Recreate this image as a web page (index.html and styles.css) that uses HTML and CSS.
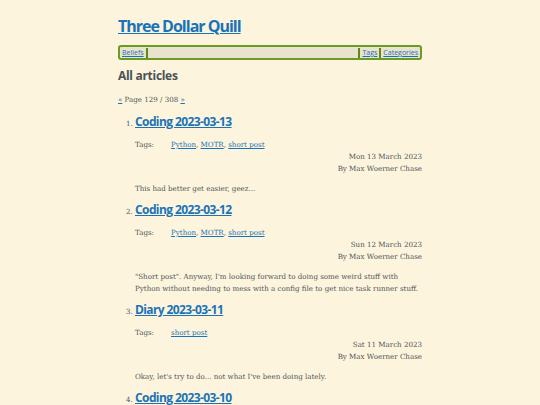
FILE: index.html
```html
<!DOCTYPE html>
<html>
<head>
<meta charset="utf-8">
<link rel="stylesheet" href="styles.css">
<title>All articles</title>
</head>
<body>
<div class="page">
  <header class="site-header">
    <h1 class="site-title"><a href="#">Three Dollar Quill</a></h1>
    <nav class="nav">
      <a href="#">Beliefs</a>
      <span class="sep"></span>
      <span class="spacer"></span>
      <span class="sep"></span>
      <a href="#">Tags</a>
      <span class="sep"></span>
      <a href="#">Categories</a>
    </nav>
  </header>
  <main>
    <h2 class="section-title">All articles</h2>
    <p class="pager"><a href="#">«</a> Page 129 / 308 <a href="#">»</a></p>
    <ol class="articles" start="1">
      <li>
        <h3 class="entry-title"><a href="#">Coding 2023-03-13</a></h3>
        <div class="tags"><span class="tags-label">Tags:</span><span><a href="#">Python</a>, <a href="#">MOTR</a>, <a href="#">short post</a></span></div>
        <div class="meta">Mon 13 March 2023<br>By Max Woerner Chase</div>
        <p class="summary">This had better get easier, geez...</p>
      </li>
      <li>
        <h3 class="entry-title"><a href="#">Coding 2023-03-12</a></h3>
        <div class="tags"><span class="tags-label">Tags:</span><span><a href="#">Python</a>, <a href="#">MOTR</a>, <a href="#">short post</a></span></div>
        <div class="meta">Sun 12 March 2023<br>By Max Woerner Chase</div>
        <p class="summary">"Short post". Anyway, I'm looking forward to doing some weird stuff with Python without needing to mess with a config file to get nice task runner stuff.</p>
      </li>
      <li>
        <h3 class="entry-title"><a href="#">Diary 2023-03-11</a></h3>
        <div class="tags"><span class="tags-label">Tags:</span><span><a href="#">short post</a></span></div>
        <div class="meta">Sat 11 March 2023<br>By Max Woerner Chase</div>
        <p class="summary">Okay, let's try to do... not what I've been doing lately.</p>
      </li>
      <li>
        <h3 class="entry-title"><a href="#">Coding 2023-03-10</a></h3>
      </li>
    </ol>
  </main>
</div>
</body>
</html>
```
FILE: styles.css
```css
html, body {
  margin: 0;
  padding: 0;
  background: #fcf4dc;
}
body {
  font-family: "DejaVu Serif", serif;
  color: #50555a;
  font-size: 7.1px;
}
.page {
  width: 304px;
  margin: 0 auto;
  padding-top: 14px;
}
a {
  color: #1a73b8;
}
.site-title {
  font-family: "Open Sans", sans-serif;
  font-size: 16px;
  font-weight: 700;
  margin: 0;
  line-height: 24px;
  letter-spacing: -1px;
}
.nav {
  margin-top: 7px;
  display: flex;
  align-items: center;
  height: 11px;
  border: 2px solid #6b9b22;
  border-radius: 3px;
  background: #e9e3cd;
  padding: 0 1px;
  font-family: "Open Sans", sans-serif;
  font-size: 7px;
}
.nav a {
  padding: 0 1px;
}
.sep {
  width: 2px;
  height: 10px;
  background: #5c8a18;
  margin: 0 1px;
}
.spacer {
  flex: 1;
}
.section-title {
  font-family: "Open Sans", sans-serif;
  font-size: 12px;
  font-weight: 700;
  color: #4b5257;
  margin: 8px 0 0;
  line-height: 16px;
  letter-spacing: -0.3px;
}
.pager {
  margin: 10px 0 0;
  line-height: 12px;
}
.articles {
  margin: 6px 0 0;
  padding-left: 17px;
}
.articles li {
  margin: 0;
}
.entry-title {
  font-family: "Open Sans", sans-serif;
  font-size: 12px;
  font-weight: 700;
  margin: 0;
  line-height: 20px;
  letter-spacing: -0.6px;
}
.tags {
  display: flex;
  margin-top: 7px;
  line-height: 12px;
}
.tags-label {
  width: 36px;
}
.meta {
  text-align: right;
  line-height: 12px;
}
.summary {
  margin: 8px 0 0;
  line-height: 12px;
  padding-bottom: 5px;
}
```
